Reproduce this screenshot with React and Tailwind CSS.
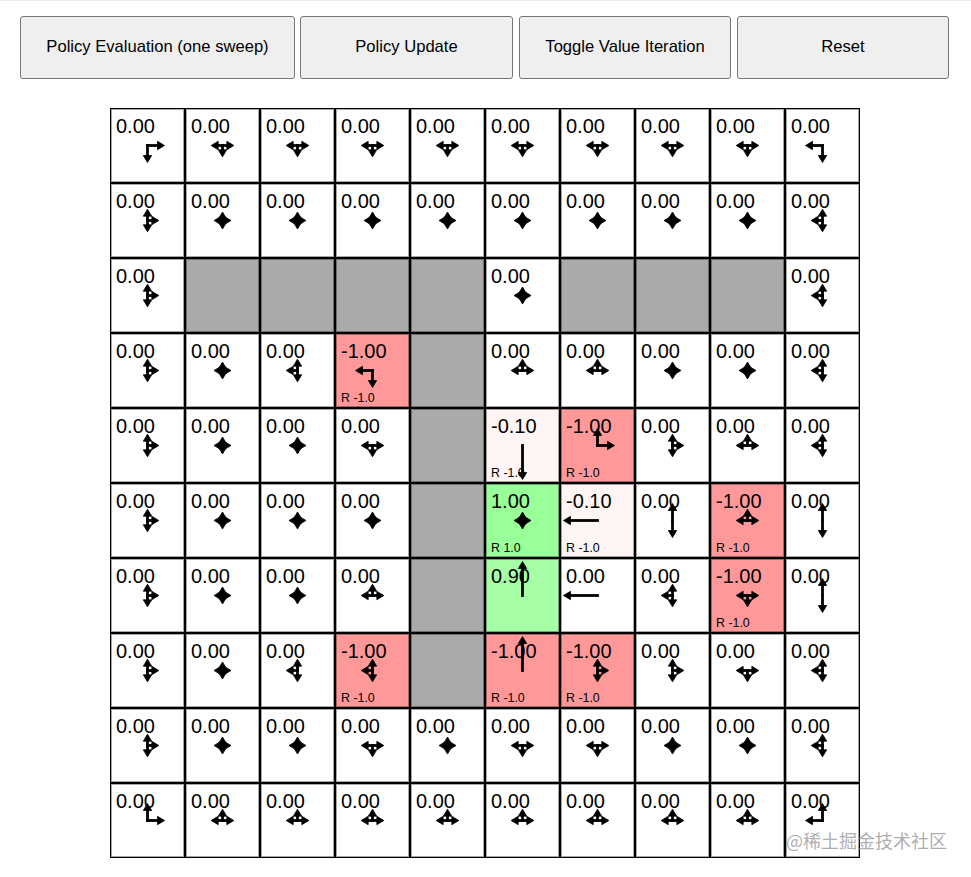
import React from "react";

const ALL = "ULRD";
// policy directions per cell, null = wall
const policy = [
  ["RD", "LRD", "LRD", "LRD", "LRD", "LRD", "LRD", "LRD", "LRD", "LD"],
  ["URD", ALL, ALL, ALL, ALL, ALL, ALL, ALL, ALL, "ULD"],
  ["URD", null, null, null, null, ALL, null, null, null, "ULD"],
  ["URD", ALL, "ULD", "LD", null, "ULR", "ULR", ALL, ALL, "ULD"],
  ["URD", ALL, ALL, "LRD", null, "D", "UR", "URD", "ULR", "ULD"],
  ["URD", ALL, ALL, ALL, null, ALL, "L", "UD", "ULR", "UD"],
  ["URD", ALL, ALL, "ULR", null, "U", "L", "ULD", "LRD", "UD"],
  ["URD", ALL, "ULD", "ULD", null, "U", "URD", "URD", "LRD", "ULD"],
  ["URD", ALL, ALL, "LRD", ALL, "LRD", "LRD", ALL, ALL, "ULD"],
  ["UR", "ULR", "ULR", "ULR", "ULR", "ULR", "ULR", "ULR", "ULR", "UL"],
];

// cells that are not plain 0.00 on white
const special = {
  "3,3": { value: "-1.00", reward: "R -1.0", bg: "bg-[#ff9999]" },
  "4,5": { value: "-0.10", reward: "R -1.0", bg: "bg-[#fff5f4]" },
  "4,6": { value: "-1.00", reward: "R -1.0", bg: "bg-[#ff9999]" },
  "5,5": { value: "1.00", reward: "R 1.0", bg: "bg-[#99ff99]" },
  "5,6": { value: "-0.10", reward: "R -1.0", bg: "bg-[#fff5f4]" },
  "5,8": { value: "-1.00", reward: "R -1.0", bg: "bg-[#ff9999]" },
  "6,5": { value: "0.90", bg: "bg-[#a6ffa6]" },
  "6,8": { value: "-1.00", reward: "R -1.0", bg: "bg-[#ff9999]" },
  "7,3": { value: "-1.00", reward: "R -1.0", bg: "bg-[#ff9999]" },
  "7,5": { value: "-1.00", reward: "R -1.0", bg: "bg-[#ff9999]" },
  "7,6": { value: "-1.00", reward: "R -1.0", bg: "bg-[#ff9999]" },
};

const vectors = { U: [0, -1], D: [0, 1], L: [-1, 0], R: [1, 0] };
const C = 36.5;

function Arrows({ dirs }) {
  const len = 34 / dirs.length;
  return (
    <svg viewBox="0 0 73 73" className="absolute inset-0 w-[73px] h-[73px]">
      {dirs.split("").map((d) => {
        const [dx, dy] = vectors[d];
        const tipX = C + dx * len;
        const tipY = C + dy * len;
        const baseX = tipX - dx * 7;
        const baseY = tipY - dy * 7;
        const head = `${tipX},${tipY} ${baseX + dy * 4.2},${baseY + dx * 4.2} ${baseX - dy * 4.2},${baseY - dx * 4.2}`;
        return (
          <g key={d}>
            <line x1={C} y1={C} x2={baseX + dx} y2={baseY + dy} stroke="#000" strokeWidth="2.8" strokeLinecap="square" />
            <polygon points={head} fill="#000" stroke="#000" strokeWidth="0.8" />
          </g>
        );
      })}
    </svg>
  );
}

const edge = "shadow-[inset_0_0_0_1px_rgba(0,0,0,0.35)]";

function Cell({ dirs, info }) {
  if (!dirs) return <div className={`bg-[#aaaaaa] ${edge}`} />;
  return (
    <div className={`relative pl-[5px] pt-[7px] text-[20px] leading-[20px] ${edge} ${info?.bg || "bg-white"}`}>
      {info?.value || "0.00"}
      {info?.reward && (
        <div className="absolute left-[5px] bottom-[3px] text-[12.4px] leading-[12px]">{info.reward}</div>
      )}
      <Arrows dirs={dirs} />
    </div>
  );
}

const btn = "h-[63px] pb-px bg-[#efefef] border border-[#767676] rounded-[3px] text-[16.6px] text-black";

export default function App() {
  return (
    <div className="relative h-[877px] bg-white text-black font-['Liberation_Sans',Arial,sans-serif]">
      <div className="h-px bg-[#eeeeee]" />
      <div className="flex pl-[20px] pt-[15px]">
        <button className={`${btn} w-[275px] mr-[5px]`}>Policy Evaluation (one sweep)</button>
        <button className={`${btn} w-[213px] mr-[6px]`}>Policy Update</button>
        <button className={`${btn} w-[212px] mr-[6px]`}>Toggle Value Iteration</button>
        <button className={`${btn} w-[212px]`}>Reset</button>
      </div>
      <div className="ml-[110px] mt-[29px] w-[750px] grid grid-cols-[repeat(10,73px)] auto-rows-[73px] gap-[2px] p-px bg-black">
        {policy.map((row, r) =>
          row.map((dirs, c) => <Cell key={`${r},${c}`} dirs={dirs} info={special[`${r},${c}`]} />)
        )}
      </div>
      {/* watermark over the corner of the grid */}
      <div className="absolute left-[786px] top-[829px] text-[18px] leading-[22px] text-[#8a8a8a]/70 font-['Noto_Sans_CJK_SC',sans-serif]">
        @稀土掘金技术社区
      </div>
    </div>
  );
}
